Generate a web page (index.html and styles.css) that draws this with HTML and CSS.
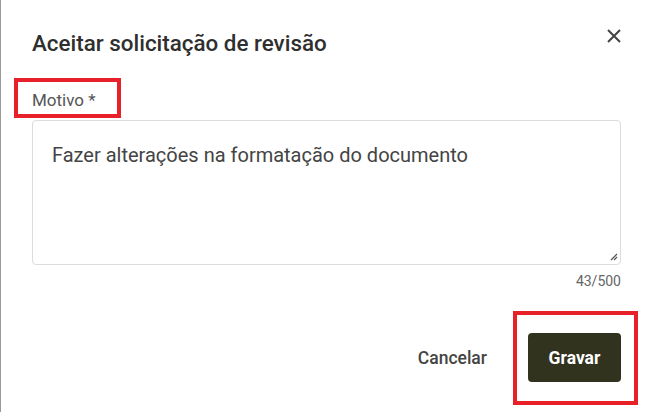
FILE: index.html
```html
<!DOCTYPE html>
<html lang="pt">
<head>
<meta charset="utf-8">
<link rel="stylesheet" href="styles.css">
</head>
<body>
<div class="dialog">
  <div class="header">
    <h1 class="title">Aceitar solicitação de revisão</h1>
    <button class="close" aria-label="Fechar">
      <svg width="14" height="14" viewBox="0 0 14 14"><path d="M1 1L13 13M13 1L1 13" stroke="#444" stroke-width="2" fill="none"/></svg>
    </button>
  </div>
  <div class="field">
    <label class="label">Motivo *</label>
    <div class="textarea">
      <div class="text">Fazer alterações na formatação do documento</div>
      <svg class="grip" width="8" height="8" viewBox="0 0 8 8"><path d="M7 1L1 7M7 4L4 7" stroke="#555" stroke-width="1.2"/></svg>
    </div>
    <div class="counter">43/500</div>
  </div>
  <div class="actions">
    <button class="btn-text">Cancelar</button>
    <button class="btn-primary">Gravar</button>
  </div>
  <div class="mark mark-label"></div>
  <div class="mark mark-button"></div>
</div>
</body>
</html>
```
FILE: styles.css
```css
* { box-sizing: border-box; }
html, body { margin: 0; padding: 0; }
body {
  width: 650px;
  height: 412px;
  background: #fff;
  font-family: Roboto, "Liberation Sans", sans-serif;
  overflow: hidden;
}
.dialog {
  position: relative;
  height: 412px;
  border-left: 1px solid #9a9a9a;
  padding: 28px 29px 0 31px;
  display: flex;
  flex-direction: column;
}
.header {
  display: flex;
  align-items: flex-start;
  justify-content: space-between;
}
.title {
  margin: 0;
  font-size: 22.4px;
  font-weight: 500;
  line-height: 30px;
  color: #2f2f2f;
}
.close {
  border: 0;
  background: none;
  padding: 0;
  margin: 1px 0 0 0;
  width: 14px;
  height: 14px;
  display: flex;
}
.field {
  margin-top: 32px;
  display: flex;
  flex-direction: column;
}
.label {
  font-size: 17px;
  line-height: 20px;
  color: #555;
  margin-bottom: 10px;
}
.textarea {
  position: relative;
  height: 145px;
  border: 1px solid #dcdcdc;
  border-radius: 4px;
  padding: 22px 19px;
}
.text {
  font-size: 20px;
  line-height: 24px;
  color: #444;
}
.grip {
  position: absolute;
  right: 2px;
  bottom: 3px;
}
.counter {
  align-self: flex-end;
  margin-top: 8px;
  font-size: 14px;
  line-height: 16px;
  color: #666;
}
.actions {
  margin-top: 44px;
  display: flex;
  justify-content: flex-end;
  align-items: center;
  gap: 41px;
}
.btn-text {
  border: 0;
  background: none;
  padding: 0;
  font-family: inherit;
  font-size: 17.5px;
  font-weight: 500;
  color: #444;
}
.btn-primary {
  border: 0;
  background: #32331f;
  color: #fff;
  border-radius: 4px;
  width: 93px;
  height: 49px;
  font-family: inherit;
  font-size: 17.5px;
  font-weight: 700;
}
.mark {
  position: absolute;
  border: 4px solid #e8202a;
}
.mark-label {
  left: 13px;
  top: 78px;
  width: 107px;
  height: 40px;
}
.mark-button {
  left: 512px;
  top: 311px;
  width: 125px;
  height: 94px;
}
```
